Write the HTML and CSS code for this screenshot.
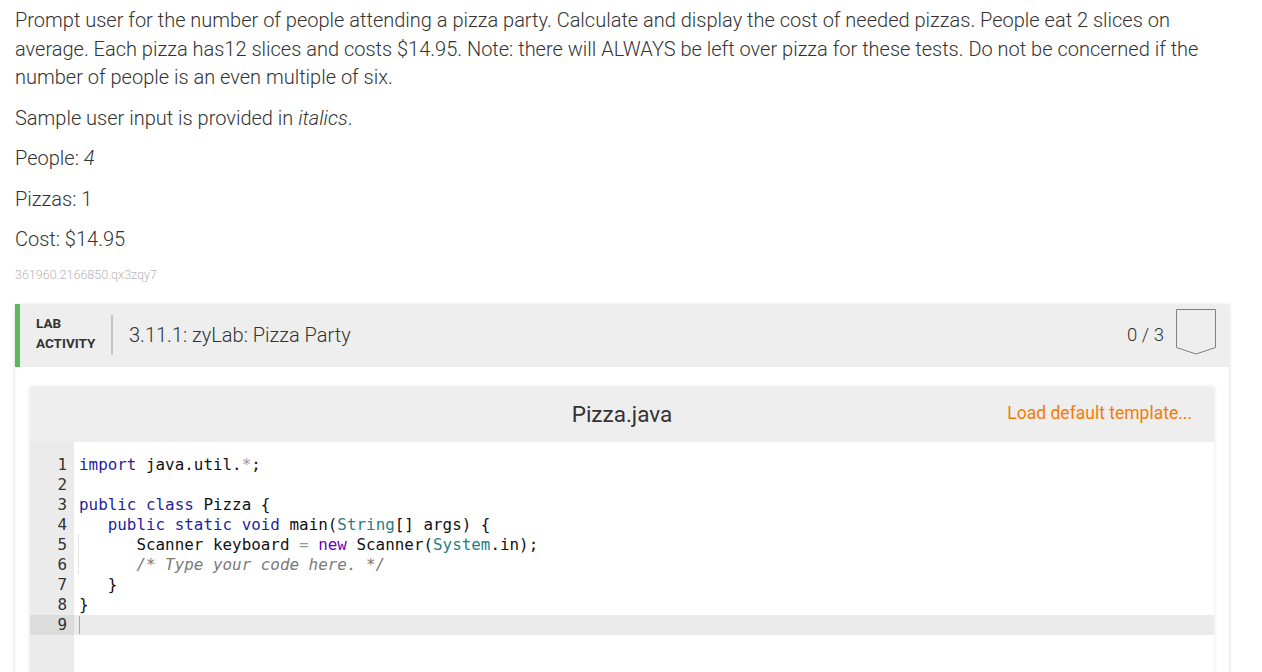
FILE: index.html
```html
<!DOCTYPE html>
<html>
<head>
<meta charset="utf-8">
<link rel="stylesheet" href="styles.css">
</head>
<body>
<div class="page">
  <div class="prompt">
    <p>Prompt user for the number of people attending a pizza party. Calculate and display the cost of needed pizzas. People eat 2 slices on average. Each pizza has12 slices and costs $14.95. Note: there will ALWAYS be left over pizza for these tests. Do not be concerned if the number of people is an even multiple of six.</p>
    <p>Sample user input is provided in <em>italics</em>.</p>
    <p>People: <em>4</em></p>
    <p>Pizzas: 1</p>
    <p>Cost: $14.95</p>
    <div class="ident">361960.2166850.qx3zqy7</div>
  </div>

  <div class="lab">
    <div class="lab-header">
      <div class="lab-label">LAB<br>ACTIVITY</div>
      <div class="lab-sep"></div>
      <div class="lab-title">3.11.1: zyLab: Pizza Party</div>
      <div class="lab-score">0 / 3</div>
      <svg class="lab-check" width="42" height="48" viewBox="0 0 42 48">
        <path d="M1.5 1.5 H40.5 V39.5 L21 46 L1.5 39.5 Z" fill="none" stroke="#808080" stroke-width="1"/>
      </svg>
    </div>
    <div class="lab-body">
      <div class="editor">
        <div class="editor-head">
          <div class="file-name">Pizza.java</div>
          <div class="load">Load default template...</div>
        </div>
        <div class="code">
          <div class="line"><span class="ln">1</span><span class="src"><span class="kw">import</span> java.util.<span class="op">*</span>;</span></div>
          <div class="line"><span class="ln">2</span><span class="src"></span></div>
          <div class="line"><span class="ln">3</span><span class="src"><span class="kw">public</span> <span class="kw">class</span> Pizza {</span></div>
          <div class="line"><span class="ln">4</span><span class="src">   <span class="kw">public</span> <span class="kw">static</span> <span class="kw">void</span> main(<span class="ty">String</span>[] args) {</span></div>
          <div class="line"><span class="ln">5</span><span class="src"><span class="guide">   </span>   Scanner keyboard <span class="op">=</span> <span class="nw">new</span> Scanner(<span class="ty">System</span>.in);</span></div>
          <div class="line"><span class="ln">6</span><span class="src"><span class="guide">   </span>   <span class="cm">/* Type your code here. */</span></span></div>
          <div class="line"><span class="ln">7</span><span class="src">   }</span></div>
          <div class="line"><span class="ln">8</span><span class="src">}</span></div>
          <div class="line active"><span class="ln">9</span><span class="src"><span class="cursor"></span></span></div>
          <div class="line filler"><span class="ln"></span><span class="src"></span></div>
        </div>
      </div>
    </div>
  </div>
</div>
</body>
</html>
```

FILE: styles.css
```css
html, body {
  margin: 0;
  padding: 0;
  background: #fff;
  overflow: hidden;
}

.page {
  padding: 6px 15px 0 15px;
  width: 1214px;
  font-family: Roboto, "Liberation Sans", sans-serif;
  font-weight: 300;
  color: #333;
}

.prompt p {
  margin: 0 0 12px 0;
  font-size: 20px;
  line-height: 28.5px;
}

.prompt em {
  font-style: italic;
}

.ident {
  font-size: 12.5px;
  color: #b5b5b5;
  line-height: 14px;
  margin-top: 14px;
}

.lab {
  margin-top: 22px;
  box-shadow: 0 1px 4px rgba(0,0,0,0.16);
  background: #fff;
}

.lab-header {
  display: flex;
  align-items: center;
  height: 63px;
  background: #eeeeee;
  border-left: 5px solid #5cb85c;
  box-sizing: border-box;
}

.lab-label {
  font-weight: 700;
  font-size: 13.5px;
  line-height: 20px;
  color: #333;
  margin-left: 16px;
  margin-top: -4px;
  width: 75px;
}

.lab-sep {
  width: 2px;
  height: 40px;
  background: #c4c4c4;
  margin-right: 16px;
}

.lab-title {
  font-size: 20px;
  color: #333;
  flex: 1;
}

.lab-score {
  font-size: 18.5px;
  color: #333;
  margin-right: 11px;
}

.lab-check {
  display: block;
  margin-right: 12px;
  align-self: flex-start;
  margin-top: 4px;
}

.lab-body {
  padding: 20px 15px 0 15px;
}

.editor {
  box-shadow: 0 0 4px rgba(0,0,0,0.12);
}

.editor-head {
  position: relative;
  height: 55px;
  background: #eeeeee;
  display: flex;
  align-items: center;
  justify-content: center;
}

.file-name {
  font-size: 22.5px;
  font-weight: 400;
  color: #333;
}

.load {
  position: absolute;
  right: 22px;
  top: 16px;
  font-size: 17.5px;
  font-weight: 400;
  color: #f57c00;
}

.code {
  padding-top: 13px;
  font-family: "DejaVu Sans Mono", monospace;
  font-size: 15.9px;
  color: #111;
  background: linear-gradient(to right, #ebebeb 0, #ebebeb 44px, #fff 44px);
}

.line {
  display: flex;
  height: 20px;
  line-height: 20px;
  white-space: pre;
}

.ln {
  width: 44px;
  box-sizing: border-box;
  padding-right: 7px;
  text-align: right;
  color: #333;
  flex: none;
}

.src {
  padding-left: 5px;
  flex: 1;
}

.line.active {
  background: #ebebeb;
}

.line.active .ln {
  background: #dcdcdc;
}

.filler {
  height: 40px;
}

.kw { color: #1f1f9e; }
.nw { color: #6b00b8; }
.ty { color: #1f7f86; }
.op { color: #999; }
.cm { color: #7a7a7a; font-style: italic; }

.guide {
  border-left: 1px dotted #cfcfcf;
  margin-left: -1px;
}

.cursor {
  display: inline-block;
  width: 1px;
  height: 18px;
  background: #aaa;
  vertical-align: middle;
}
```
